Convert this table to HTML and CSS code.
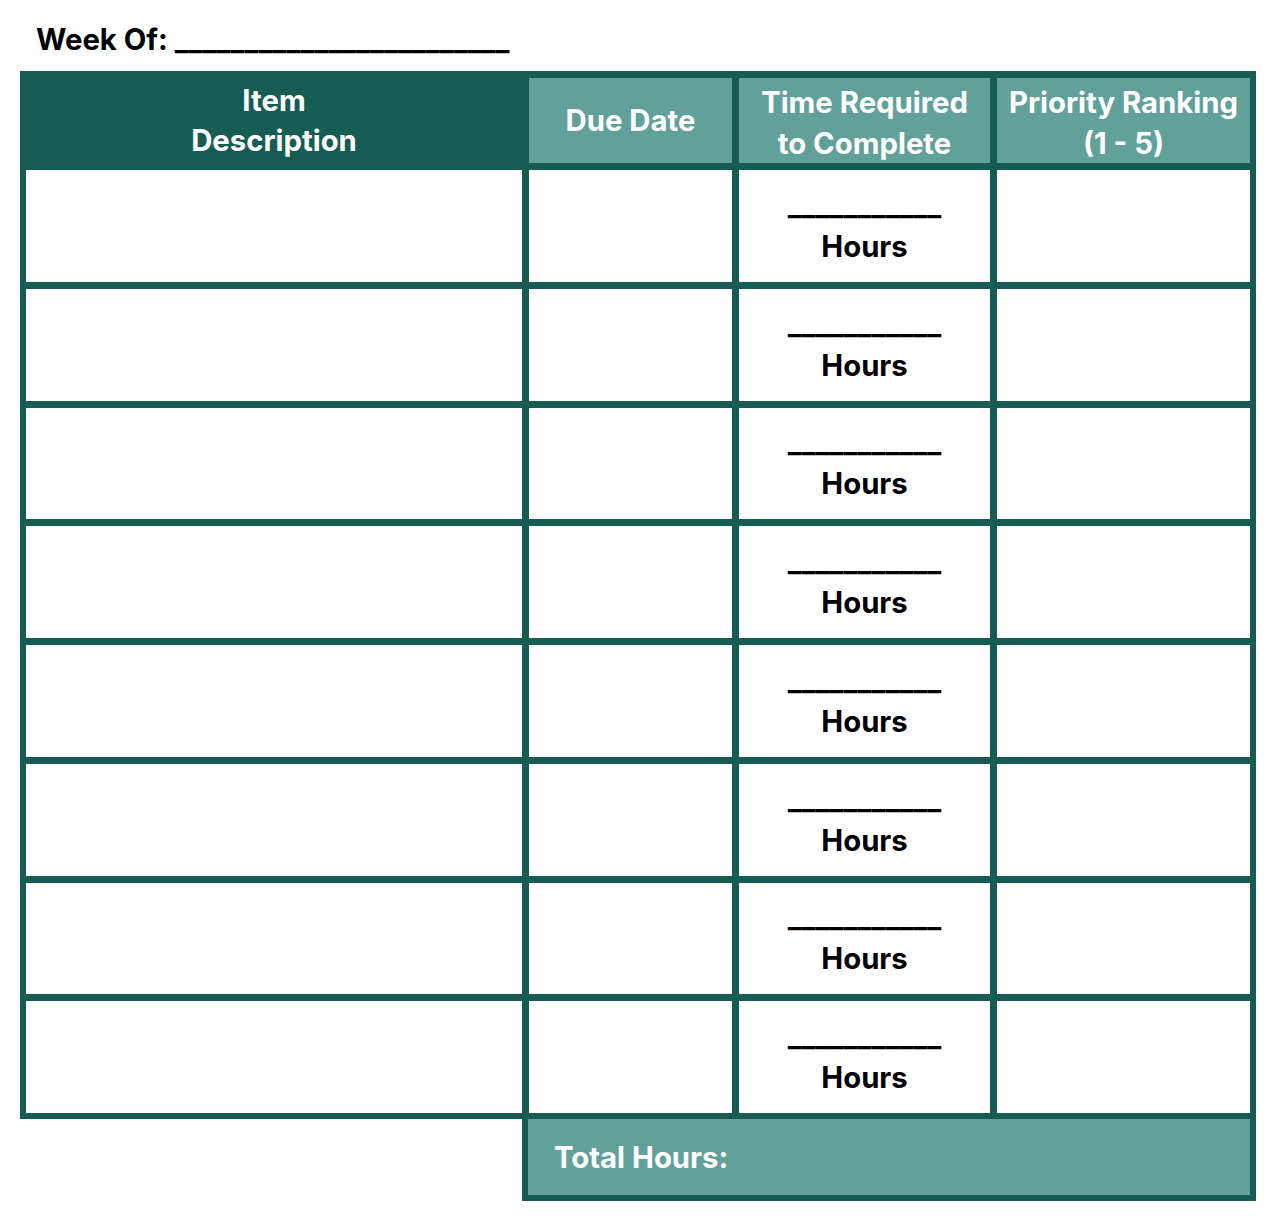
FILE: index.html
```html
<!DOCTYPE html>
<html lang="en">
<head>
<meta charset="utf-8">
<title>Weekly Planner</title>
<link rel="stylesheet" href="styles.css">
</head>
<body>
<div class="page">
  <h1 class="week">Week Of: <span class="blank">________________________</span></h1>
  <div class="grid">
    <div class="hd hd-item">Item<br>Description</div>
    <div class="hd hd-light">Due Date</div>
    <div class="hd hd-light hd-time">Time Required<br>to Complete</div>
    <div class="hd hd-light hd-time">Priority Ranking<br>(1 - 5)</div>

    <div class="cell"></div><div class="cell"></div>
    <div class="cell hours"><span class="line">___________</span><span>Hours</span></div><div class="cell"></div>

    <div class="cell"></div><div class="cell"></div>
    <div class="cell hours"><span class="line">___________</span><span>Hours</span></div><div class="cell"></div>

    <div class="cell"></div><div class="cell"></div>
    <div class="cell hours"><span class="line">___________</span><span>Hours</span></div><div class="cell"></div>

    <div class="cell"></div><div class="cell"></div>
    <div class="cell hours"><span class="line">___________</span><span>Hours</span></div><div class="cell"></div>

    <div class="cell"></div><div class="cell"></div>
    <div class="cell hours"><span class="line">___________</span><span>Hours</span></div><div class="cell"></div>

    <div class="cell"></div><div class="cell"></div>
    <div class="cell hours"><span class="line">___________</span><span>Hours</span></div><div class="cell"></div>

    <div class="cell"></div><div class="cell"></div>
    <div class="cell hours"><span class="line">___________</span><span>Hours</span></div><div class="cell"></div>

    <div class="cell"></div><div class="cell"></div>
    <div class="cell hours"><span class="line">___________</span><span>Hours</span></div><div class="cell"></div>
  </div>
  <div class="total"><span>Total Hours:</span></div>
</div>
</body>
</html>
```

FILE: styles.css
```css
html, body {
  margin: 0;
  padding: 0;
  background: #ffffff;
}

body {
  font-family: Inter, "Noto Sans", "Liberation Sans", sans-serif;
  color: #000000;
}

.page {
  padding: 20px 0 0 20px;
}

.week {
  margin: 0 0 11px 16px;
  font-size: 29.3px;
  line-height: 40px;
  font-weight: 700;
  white-space: nowrap;
}

.blank {
  white-space: nowrap;
}

.grid {
  display: grid;
  box-sizing: border-box;
  width: 1236px;
  grid-template-columns: 496px 203px 251px 253px;
  grid-template-rows: 85px repeat(8, 111.75px);
  column-gap: 7px;
  row-gap: 7px;
  padding: 7px 6px 6px 6px;
  background: #175c54;
}

.hd {
  display: flex;
  align-items: center;
  justify-content: center;
  text-align: center;
  color: #ffffff;
  font-weight: 700;
  font-size: 29.3px;
  line-height: 40px;
}

.hd-time {
  line-height: 41px;
  padding-top: 5px;
}

.hd-light {
  background: #62a19a;
}

.cell {
  background: #ffffff;
}

.hours {
  display: flex;
  flex-direction: column;
  align-items: center;
  justify-content: center;
  font-weight: 700;
  font-size: 29.3px;
  line-height: 42px;
}

.line {
  display: block;
  white-space: nowrap;
}

.total {
  box-sizing: border-box;
  margin-left: 502px;
  width: 734px;
  height: 82px;
  border: 6px solid #175c54;
  border-top: 0;
  background: #62a19a;
  padding-left: 26px;
  display: flex;
  align-items: center;
  color: #ffffff;
  font-weight: 700;
  font-size: 29.3px;
}
```
